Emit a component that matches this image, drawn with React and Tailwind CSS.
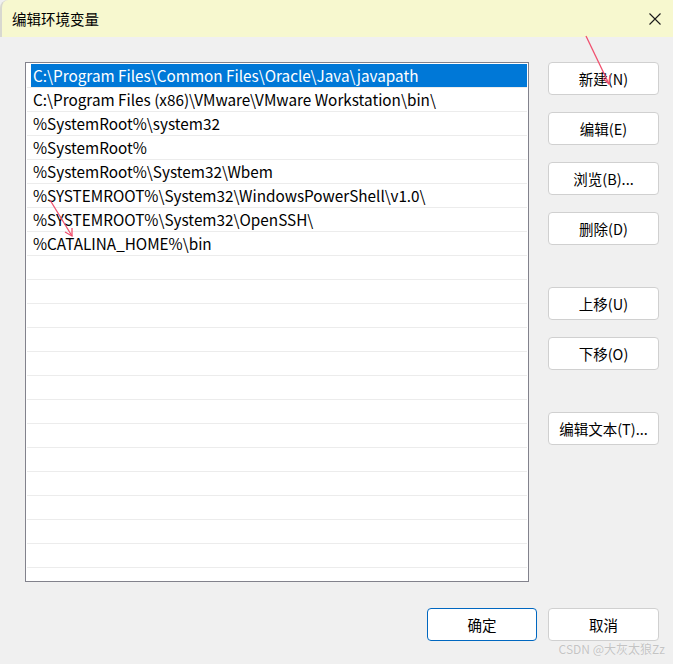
const rows = [
  'C:\\Program Files\\Common Files\\Oracle\\Java\\javapath',
  'C:\\Program Files (x86)\\VMware\\VMware Workstation\\bin\\',
  '%SystemRoot%\\system32',
  '%SystemRoot%',
  '%SystemRoot%\\System32\\Wbem',
  '%SYSTEMROOT%\\System32\\WindowsPowerShell\\v1.0\\',
  '%SYSTEMROOT%\\System32\\OpenSSH\\',
  '%CATALINA_HOME%\\bin',
];

const font = { fontFamily: '"Noto Sans CJK SC", "Noto Sans", sans-serif' };

const Btn = ({ children, primary, className = '' }) => (
  <button
    className={`h-[33px] rounded-[4px] bg-white text-[14.5px] text-black flex items-center justify-center ${
      primary ? 'border border-[#0067c0]' : 'border border-[#d0d0d0]'
    } ${className}`}
  >
    {children}
  </button>
);

const App = () => {
  const all = [...rows, ...Array(14).fill('')];

  return (
    <div className="relative w-[673px] h-[664px] bg-[#f0f0f0] overflow-hidden" style={font}>
      {/* Title bar */}
      <div className="h-[37px] bg-[#f7f8cf] flex items-center justify-between pl-[10px] pr-[12px] rounded-tl-[8px] border-l-[2px] border-[#d8d8d0]">
        <span className="text-[14.5px] text-black">编辑环境变量</span>
        <svg width="12" height="12" viewBox="0 0 12 12" className="mt-[1px]">
          <path d="M0.5 0.5 L11.5 11.5 M11.5 0.5 L0.5 11.5" stroke="#1a1a1a" strokeWidth="1.1" />
        </svg>
      </div>

      {/* Body */}
      <div className="pl-[25px] pt-[25px]">
        <div className="flex gap-[19px]">
          {/* List */}
          <div className="w-[504px] h-[520px] bg-white border border-[#82828c] pt-[1px] pl-[1px] pr-[1px] overflow-hidden">
            {all.map((r, i) => (
              <div key={i} className="h-[24px] border-b border-[#ececec]">
                <div
                  className={`h-[23px] leading-[23px] text-[15.3px] whitespace-nowrap ${
                    i === 0 ? 'ml-[4px] pl-[2px] bg-[#0078d7] text-white' : 'pl-[6px] text-black'
                  }`}
                >
                  {r}
                </div>
              </div>
            ))}
          </div>

          {/* Buttons */}
          <div className="w-[111px] flex flex-col">
            <Btn>新建(N)</Btn>
            <Btn className="mt-[17px]">编辑(E)</Btn>
            <Btn className="mt-[17px]">浏览(B)...</Btn>
            <Btn className="mt-[17px]">删除(D)</Btn>
            <Btn className="mt-[42px]">上移(U)</Btn>
            <Btn className="mt-[17px]">下移(O)</Btn>
            <Btn className="mt-[42px]">编辑文本(T)...</Btn>
          </div>
        </div>

        {/* Footer buttons */}
        <div className="flex justify-end gap-[11px] pr-[14px] mt-[26px]">
          <Btn primary className="w-[110px]">确定</Btn>
          <Btn className="w-[111px]">取消</Btn>
        </div>
      </div>

      {/* Annotation arrows */}
      <svg className="absolute inset-0 pointer-events-none" width="673" height="664">
        <path d="M586 36 L609 84" stroke="#f0506e" strokeWidth="1.3" fill="none" />
        <path d="M603 78 L609 84 L610 75" stroke="#f0506e" strokeWidth="1.3" fill="none" />
        <path d="M50 200 L72 236" stroke="#f0506e" strokeWidth="1.3" fill="none" />
        <path d="M65 232 L72 236 L72 228" stroke="#f0506e" strokeWidth="1.3" fill="none" />
      </svg>

      {/* Watermark */}
      <div className="absolute right-[8px] bottom-[6px] text-[12px] text-[#c4c4c4] [text-shadow:0_0_1px_#fff]">
        CSDN @大灰太狼Zz
      </div>
    </div>
  );
};

export default App;
